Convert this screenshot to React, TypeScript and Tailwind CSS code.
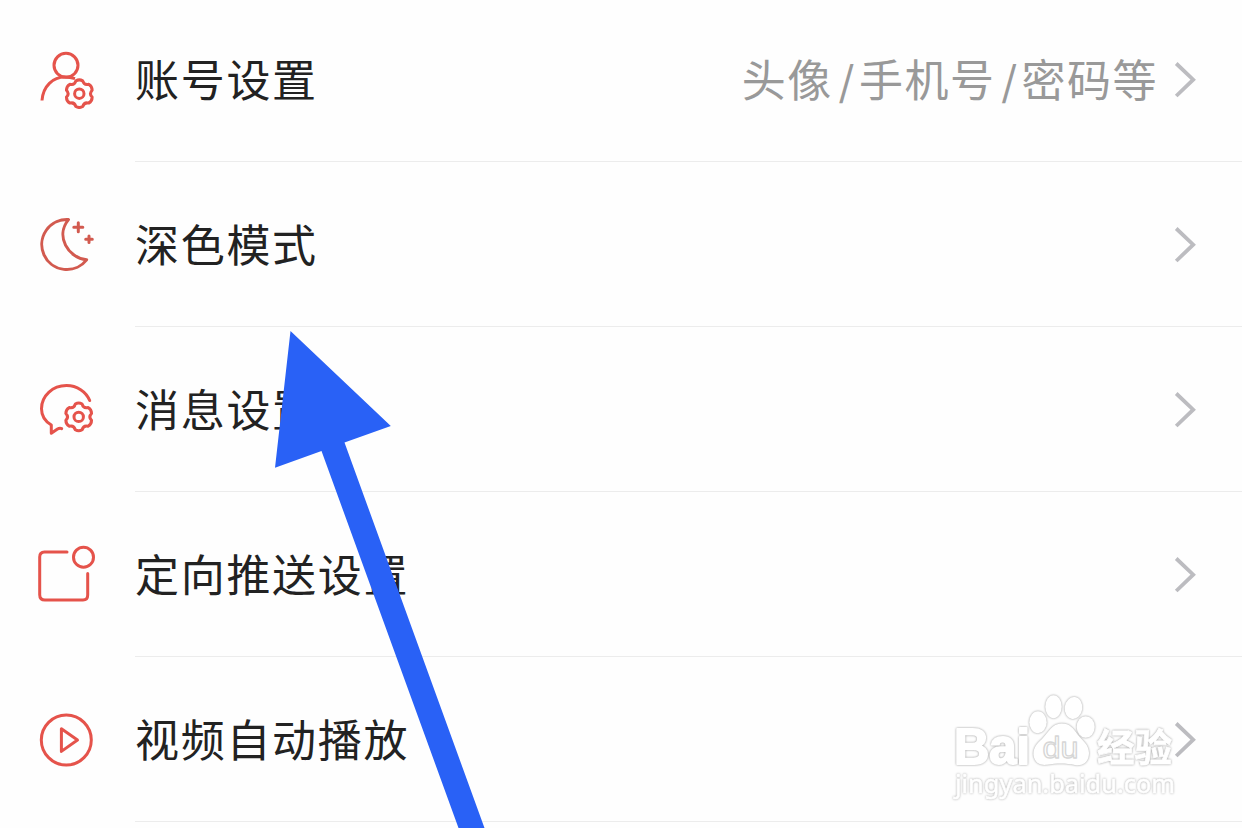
import type { ReactNode } from "react";

const RED = "#e5534b";

function point(cx: number, cy: number, deg: number, r: number) {
  const a = (deg * Math.PI) / 180;
  return `${(cx + r * Math.cos(a)).toFixed(2)} ${(cy + r * Math.sin(a)).toFixed(2)}`;
}

// six rounded teeth, one of them pointing up
function gearPath(cx: number, cy: number) {
  let d = `M${point(cx, cy, -105, 13.3)}`;
  for (let i = 0; i < 6; i++) {
    const a = -90 + i * 60;
    d += `Q${point(cx, cy, a, 14.8)} ${point(cx, cy, a + 15, 13.3)}`;
    d += `C${point(cx, cy, a + 24, 10.6)} ${point(cx, cy, a + 36, 10.6)} ${point(cx, cy, a + 45, 13.3)}`;
  }
  return d + "Z";
}

function Gear({ cx, cy }: { cx: number; cy: number }) {
  return (
    <>
      <path d={gearPath(cx, cy)} />
      <circle cx={cx} cy={cy} r="4.7" />
    </>
  );
}

function Icon({ color = RED, children }: { color?: string; children: ReactNode }) {
  return (
    <svg
      viewBox="0 0 60 60"
      className="h-[60px] w-[60px] flex-none"
      fill="none"
      stroke={color}
      strokeWidth="3"
      strokeLinecap="round"
      strokeLinejoin="round"
    >
      {children}
    </svg>
  );
}

function AccountIcon() {
  return (
    <Icon>
      <circle cx="30" cy="16.3" r="12" />
      <path d="M6 51.5C7 37 17 28 29 28Q34 28 39 29.6" strokeLinecap="butt" />
      <Gear cx={43.3} cy={44.7} />
    </Icon>
  );
}

function MoonIcon() {
  return (
    <Icon color="#d25a4f">
      <path d="M32.5 5.6A25 25 0 1 0 50.6 45.8C32 44 19 22 32.5 5.6Z" />
      <path d="M42.3 8.8v9M37.8 13.3h9M53 22v6.6M49.7 25.3h6.6" />
    </Icon>
  );
}

function MessageIcon() {
  return (
    <Icon>
      <path d="M53.7 21.5C50 12.5 41 6.6 30.5 6.6C16.5 6.6 5.5 17 5.5 29.7C5.5 38 9.5 42.5 15.3 46V54.3L21.5 50Q23.8 48.6 25.7 49.6" />
      <Gear cx={42.7} cy={37.9} />
    </Icon>
  );
}

function PushIcon() {
  return (
    <Icon>
      <path d="M31 8H8.500Q3.700 8 3.700 13V50.700Q3.700 56 9 56H47Q51.700 56 51.700 51V29.500" />
      <circle cx="47.5" cy="13.2" r="10" />
    </Icon>
  );
}

function VideoIcon() {
  return (
    <Icon>
      <circle cx="30.3" cy="31" r="25" />
      <path d="M25.400 19.800V42.400L41.500 31Z" />
    </Icon>
  );
}

function Chevron() {
  return (
    <svg viewBox="0 0 24 40" className="h-10 w-6 flex-none" fill="none" stroke="#bcbcc0" strokeWidth="3.8">
      <path d="M3.200 4.500L20.200 20.700L3.200 37" />
    </svg>
  );
}

function Row({ icon, label, children }: { icon: ReactNode; label: string; children?: ReactNode }) {
  return (
    <div className="flex h-[165px] flex-none pl-9">
      <div className="flex w-[99px] items-center pb-px">{icon}</div>
      <div className="flex flex-1 items-center border-b border-[#ececec] pr-[45px]">
        <div className="pb-[3px] text-[44px] leading-[60px] tracking-[1.7px] whitespace-nowrap text-[#222]">{label}</div>
        <div className="mr-[15px] ml-auto pb-[3px] text-[44px] leading-[60px] tracking-[1.5px] whitespace-nowrap text-[#999]">
          {children}
        </div>
        <Chevron />
      </div>
    </div>
  );
}

function Slash() {
  return <span className="mr-[3px] ml-[6px] inline-block -translate-y-px text-[40px] leading-none font-medium">/</span>;
}

function Watermark() {
  return (
    <svg
      viewBox="945 685 240 125"
      className="absolute top-[685px] left-[945px] h-[125px] w-[240px]"
      fill="#fff"
      strokeLinejoin="round"
    >
      <g className="[filter:drop-shadow(0_0_1px_#999)]">
        <text
          x="954"
          y="764"
          textLength="76"
          lengthAdjust="spacingAndGlyphs"
          stroke="#fff"
          strokeWidth="2"
          className="font-['Liberation_Sans'] text-[50px] font-bold"
        >
          Bai
        </text>
      </g>
      <g className="[filter:drop-shadow(0_0_1px_#999)]">
        <ellipse cx="1038" cy="722.3" rx="8.7" ry="11" />
        <ellipse cx="1053.5" cy="706.7" rx="8.2" ry="11.5" />
        <ellipse cx="1073.5" cy="708" rx="8.8" ry="11" transform="rotate(8 1073.5 708)" />
        <ellipse cx="1085.7" cy="727" rx="9" ry="10.8" />
      </g>
      <path
        className="[filter:drop-shadow(0_0_1px_#999)]"
        d="M1061.5 723.5C1052 723.5 1048 733 1042 739C1036 744 1033 749 1033.5 755C1034.5 763 1040 765.5 1047 764.8C1057 763 1066 763 1075 765C1084 766.5 1089 761 1089 753C1089 745 1083 741 1078 735C1073 728 1070 723.5 1061.5 723.5Z"
      />
      <text
        x="1042.5"
        y="758"
        textLength="36"
        lengthAdjust="spacingAndGlyphs"
        stroke="#d6d6d6"
        strokeWidth="1.3"
        className="font-['Liberation_Sans'] text-[30px]"
      >
        du
      </text>
      <g className="[filter:drop-shadow(0_0_1px_#999)]">
        <text
          x="1097"
          y="761"
          textLength="75"
          lengthAdjust="spacingAndGlyphs"
          stroke="#fff"
          strokeWidth="0.8"
          className="font-['Noto_Sans_CJK_SC',sans-serif] text-[38px] font-bold"
        >
          经验
        </text>
      </g>
      <g className="[filter:drop-shadow(0_0_1px_#aaa)]">
        <text
          x="955"
          y="793"
          textLength="220"
          lengthAdjust="spacingAndGlyphs"
          stroke="#fff"
          strokeWidth="0.6"
          className="font-['Noto_Sans'] text-[25px]"
        >
          jingyan.baidu.com
        </text>
      </g>
    </svg>
  );
}

function Arrow() {
  return (
    <svg viewBox="270 325 220 503" className="absolute top-[325px] left-[270px] h-[503px] w-[220px]">
      <path fill="#2961f6" d="M290.5 331L390.8 426L344.5 442.5L484.5 828H458.5L321.5 451L275 467.8Z" />
    </svg>
  );
}

export default function App() {
  return (
    <div className="relative h-screen overflow-hidden bg-[#fefefe] font-['Noto_Sans_CJK_SC',sans-serif]">
      <div className="-mt-[3px] flex flex-col">
        <Row icon={<AccountIcon />} label="账号设置">
          头像
          <Slash />
          手机号
          <Slash />
          密码等
        </Row>
        <Row icon={<MoonIcon />} label="深色模式" />
        <Row icon={<MessageIcon />} label="消息设置" />
        <Row icon={<PushIcon />} label="定向推送设置" />
        <Row icon={<VideoIcon />} label="视频自动播放" />
      </div>
      <Watermark />
      <Arrow />
    </div>
  );
}
